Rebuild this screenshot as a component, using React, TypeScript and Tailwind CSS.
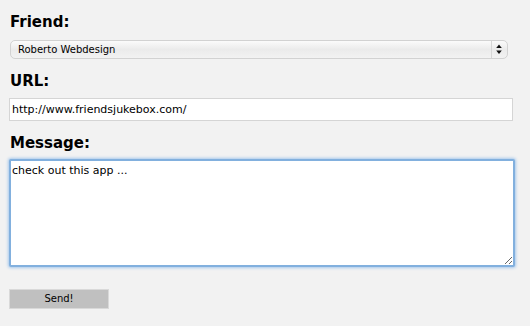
import { useState } from "react";

const font = { fontFamily: '"DejaVu Sans", Verdana, sans-serif' };

function Label({ children }: { children: React.ReactNode }) {
  return (
    <label className="block text-[15px] font-bold leading-[18px] text-black">
      {children}
    </label>
  );
}

export default function App() {
  const [friend, setFriend] = useState("Roberto Webdesign");
  const [url, setUrl] = useState("http://www.friendsjukebox.com/");
  const [msg, setMsg] = useState("check out this app ...");

  return (
    <div className="min-h-[326px] w-[530px] bg-[#f2f2f2] pl-[10px] pt-[13px]" style={font}>
      <Label>Friend:</Label>
      <div className="relative mt-[9px] w-[498px]">
        <select
          value={friend}
          onChange={(e) => setFriend(e.target.value)}
          className="block h-[19px] w-full appearance-none rounded-[5px] border border-[#d2d2d2] bg-gradient-to-b from-[#fbfbfb] via-[#ebebeb] to-[#f2f2f2] pl-[7px] text-[10px] leading-[17px] text-black outline-none"
        >
          <option>Roberto Webdesign</option>
          <option>Anna Schmidt</option>
        </select>
        <div className="pointer-events-none absolute right-[16px] top-[1px] h-[17px] w-px bg-[#d6d6d6]" />
        <svg
          className="pointer-events-none absolute right-[6px] top-[4px]"
          width="6"
          height="11"
          viewBox="0 0 6 11"
        >
          <path d="M3 0.5 L5.8 4 L0.2 4 Z" fill="#111" />
          <path d="M0.2 6.5 L5.8 6.5 L3 10 Z" fill="#111" />
        </svg>
      </div>

      <div className="mt-[13px]">
        <Label>URL:</Label>
      </div>
      <input
        value={url}
        onChange={(e) => setUrl(e.target.value)}
        className="mt-[8px] -ml-px block h-[23px] w-[504px] border border-[#d5d5d5] bg-white px-[2px] text-[11px] text-black outline-none"
      />

      <div className="mt-[13px]">
        <Label>Message:</Label>
      </div>
      <textarea
        value={msg}
        onChange={(e) => setMsg(e.target.value)}
        className="mt-[7px] -ml-[1px] block h-[108px] w-[506px] rounded-[2px] border-2 border-[#82b0de] bg-white px-[1px] pt-[3px] text-[11px] leading-[14px] text-black shadow-[0_0_3px_1px_#a6c8ec] outline-none"
      />

      <button className="mt-[22px] -ml-px block h-[20px] w-[100px] border border-[#d9d9d9] bg-[#c0c0c0] text-[10px] leading-[18px] text-black">
        Send!
      </button>
    </div>
  );
}
